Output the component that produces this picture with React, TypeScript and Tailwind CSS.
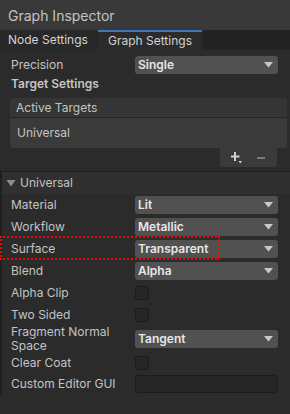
import { ReactNode } from "react";

const font = { fontFamily: "Inter, 'Noto Sans', sans-serif" };

function Dropdown({ value }: { value: string }) {
  return (
    <div className="flex h-[18px] w-[143px] items-center justify-between rounded-[3px] bg-[#515151] pl-[3px] pr-[5px]">
      <span className="text-[12px] font-semibold text-[#e6e6e6]">{value}</span>
      <svg width="9" height="6" viewBox="0 0 9 6">
        <path d="M0 0 H9 L4.5 5.5 Z" fill="#c8c8c8" />
      </svg>
    </div>
  );
}

function Checkbox() {
  return <div className="h-[14px] w-[14px] rounded-[2px] border border-[#1c1c1c] bg-[#262626]" />;
}

function Row({ label, children, h = "h-[22px]" }: { label: string; children: ReactNode; h?: string }) {
  return (
    <div className={`flex items-center ${h}`}>
      <div className="w-[135px] pl-[11px] pr-[6px] text-[12px] leading-[14px] text-[#c4c4c4]">{label}</div>
      <div>{children}</div>
    </div>
  );
}

export default function App() {
  return (
    <div style={font} className="h-[414px] w-[290px] overflow-hidden bg-[#2b2b2b]">
      <div className="flex h-[30px] items-center bg-[#393939] px-[8px] text-[14px] text-[#c4c4c4]">
        Graph Inspector
      </div>
      <div className="flex h-[20px] bg-[#232323] text-[12px] text-[#d2d2d2]">
        <div className="flex w-[98px] items-center bg-[#282828] pl-[8px]">Node Settings</div>
        <div className="flex w-[104px] items-center border-t-2 border-[#3a79bb] bg-[#2b2b2b] pl-[10px]">
          Graph Settings
        </div>
      </div>
      <div className="pt-[4px]">
        <Row label="Precision">
          <Dropdown value="Single" />
        </Row>
        <div className="flex h-[16px] items-center pl-[11px] text-[12px] font-semibold text-[#c4c4c4]">
          Target Settings
        </div>
        <div className="ml-[10px] mr-[3px] mt-[6px]">
          <div className="overflow-hidden rounded-[3px] bg-[#3a3a3a]">
            <div className="flex h-[20px] items-center border-b border-[#242424] bg-[#353535] pl-[6px] text-[12px] text-[#c4c4c4]">
              Active Targets
            </div>
            <div className="flex h-[30px] items-center pl-[7px] text-[12px] text-[#c4c4c4]">Universal</div>
          </div>
          <div className="ml-[210px] flex h-[19px] w-[57px] items-center gap-[14px] rounded-b-[3px] bg-[#3a3a3a] pl-[11px]">
            <svg width="12" height="12" viewBox="0 0 12 12">
              <path d="M4 0 V9 M0 4.5 H8.5" stroke="#d0d0d0" strokeWidth="2" />
              <path d="M7.5 9 H11 L9.25 11.5 Z" fill="#d0d0d0" />
            </svg>
            <div className="h-[2px] w-[8px] bg-[#7a7a7a]" />
          </div>
        </div>
        <div className="mt-[4px] border-l-2 border-t border-[#1f1f1f]">
          <div className="flex h-[22px] items-center bg-[#303030] pl-[4px] text-[12px] text-[#c4c4c4]">
            <svg width="10" height="10" viewBox="0 0 10 10" className="mr-[4px]">
              <path d="M0.5 2 H9.5 L5 8.5 Z" fill="#8c8c8c" />
            </svg>
            Universal
          </div>
          <div className="-ml-[2px]">
            <Row label="Material">
              <Dropdown value="Lit" />
            </Row>
            <Row label="Workflow">
              <Dropdown value="Metallic" />
            </Row>
            <div className="relative">
              <Row label="Surface">
                <Dropdown value="Transparent" />
              </Row>
              <div className="absolute -top-[2px] left-0 h-[24px] w-[220px] border-2 border-dotted border-[#ff0000]" />
            </div>
            <Row label="Blend">
              <Dropdown value="Alpha" />
            </Row>
            <Row label="Alpha Clip">
              <Checkbox />
            </Row>
            <Row label="Two Sided" h="h-[21px]">
              <Checkbox />
            </Row>
            <Row label="Fragment Normal Space" h="h-[28px]">
              <Dropdown value="Tangent" />
            </Row>
            <Row label="Clear Coat" h="h-[20px]">
              <Checkbox />
            </Row>
            <Row label="Custom Editor GUI">
              <div className="h-[18px] w-[143px] rounded-[3px] border border-[#1c1c1c] bg-[#262626]" />
            </Row>
          </div>
        </div>
      </div>
    </div>
  );
}
